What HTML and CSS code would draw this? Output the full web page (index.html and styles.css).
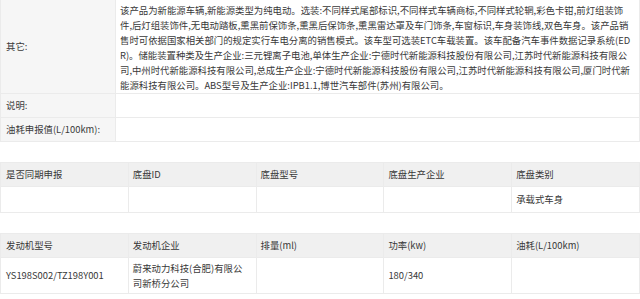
FILE: index.html
```html
<!DOCTYPE html>
<html lang="zh-CN">
<head>
<meta charset="utf-8">
<link rel="stylesheet" href="styles.css">
</head>
<body>
<table class="info">
  <colgroup><col class="c-label"><col></colgroup>
  <tr class="r-long">
    <th>其它:</th>
    <td>该产品为新能源车辆,新能源类型为纯电动。选装:不同样式尾部标识,不同样式车辆商标,不同样式轮辋,彩色卡钳,前灯组装饰件,后灯组装饰件,无电动踏板,熏黑前保饰条,熏黑后保饰条,熏黑雷达罩及车门饰条,车窗标识,车身装饰线,双色车身。该产品销售时可依据国家相关部门的规定实行车电分离的销售模式。该车型可选装ETC车载装置。该车配备汽车事件数据记录系统(EDR)。储能装置种类及生产企业:三元锂离子电池,单体生产企业:宁德时代新能源科技股份有限公司,江苏时代新能源科技有限公司,中州时代新能源科技有限公司,总成生产企业:宁德时代新能源科技股份有限公司,江苏时代新能源科技有限公司,厦门时代新能源科技有限公司。ABS型号及生产企业:IPB1.1,博世汽车部件(苏州)有限公司。</td>
  </tr>
  <tr class="r-short"><th>说明:</th><td></td></tr>
  <tr class="r-short"><th>油耗申报值(L/100km):</th><td></td></tr>
</table>

<table class="grid">
  <tr class="head"><th>是否同期申报</th><th>底盘ID</th><th>底盘型号</th><th>底盘生产企业</th><th>底盘类别</th></tr>
  <tr class="data"><td></td><td></td><td></td><td></td><td>承载式车身</td></tr>
</table>

<table class="grid">
  <tr class="head"><th>发动机型号</th><th>发动机企业</th><th>排量(ml)</th><th>功率(kw)</th><th>油耗(L/100km)</th></tr>
  <tr class="data tall"><td>YS198S002/TZ198Y001</td><td>蔚来动力科技(合肥)有限公司新桥分公司</td><td></td><td>180/340</td><td></td></tr>
</table>
</body>
</html>
```

FILE: styles.css
```css
html, body {
  margin: 0;
  padding: 0;
  background: #ffffff;
}
body {
  font-family: "Noto Sans CJK SC", "Noto Sans", sans-serif;
  font-size: 9.4px;
  color: #383838;
  width: 640px;
}
table {
  border-collapse: collapse;
  table-layout: fixed;
  width: 640px;
}
th, td {
  font-weight: normal;
  text-align: left;
  border: 1px solid #ebebeb;
  padding: 0 4px;
  line-height: 14.8px;
  vertical-align: middle;
  word-break: break-all;
}
.info {
  margin-bottom: 20px;
}
.info .c-label {
  width: 115px;
}
.info th {
  background: #f6f6f6;
  padding-left: 5px;
  color: #3a3a3a;
}
.info .r-long td {
  padding: 3px 4px 0 4px;
  line-height: 15px;
}
.info .r-short th,
.info .r-short td {
  height: 23px;
}
.info tr:first-child th,
.info tr:first-child td {
  border-top: none;
}
.grid {
  margin-bottom: 20px;
}
.grid:last-child {
  margin-bottom: 0;
}
.grid th {
  background: #f0f0f0;
  height: 23px;
}
.grid td {
  height: 25px;
}
.grid .tall td {
  height: 35px;
}
.grid th:first-child,
.grid td:first-child {
  padding-left: 5px;
}
```
